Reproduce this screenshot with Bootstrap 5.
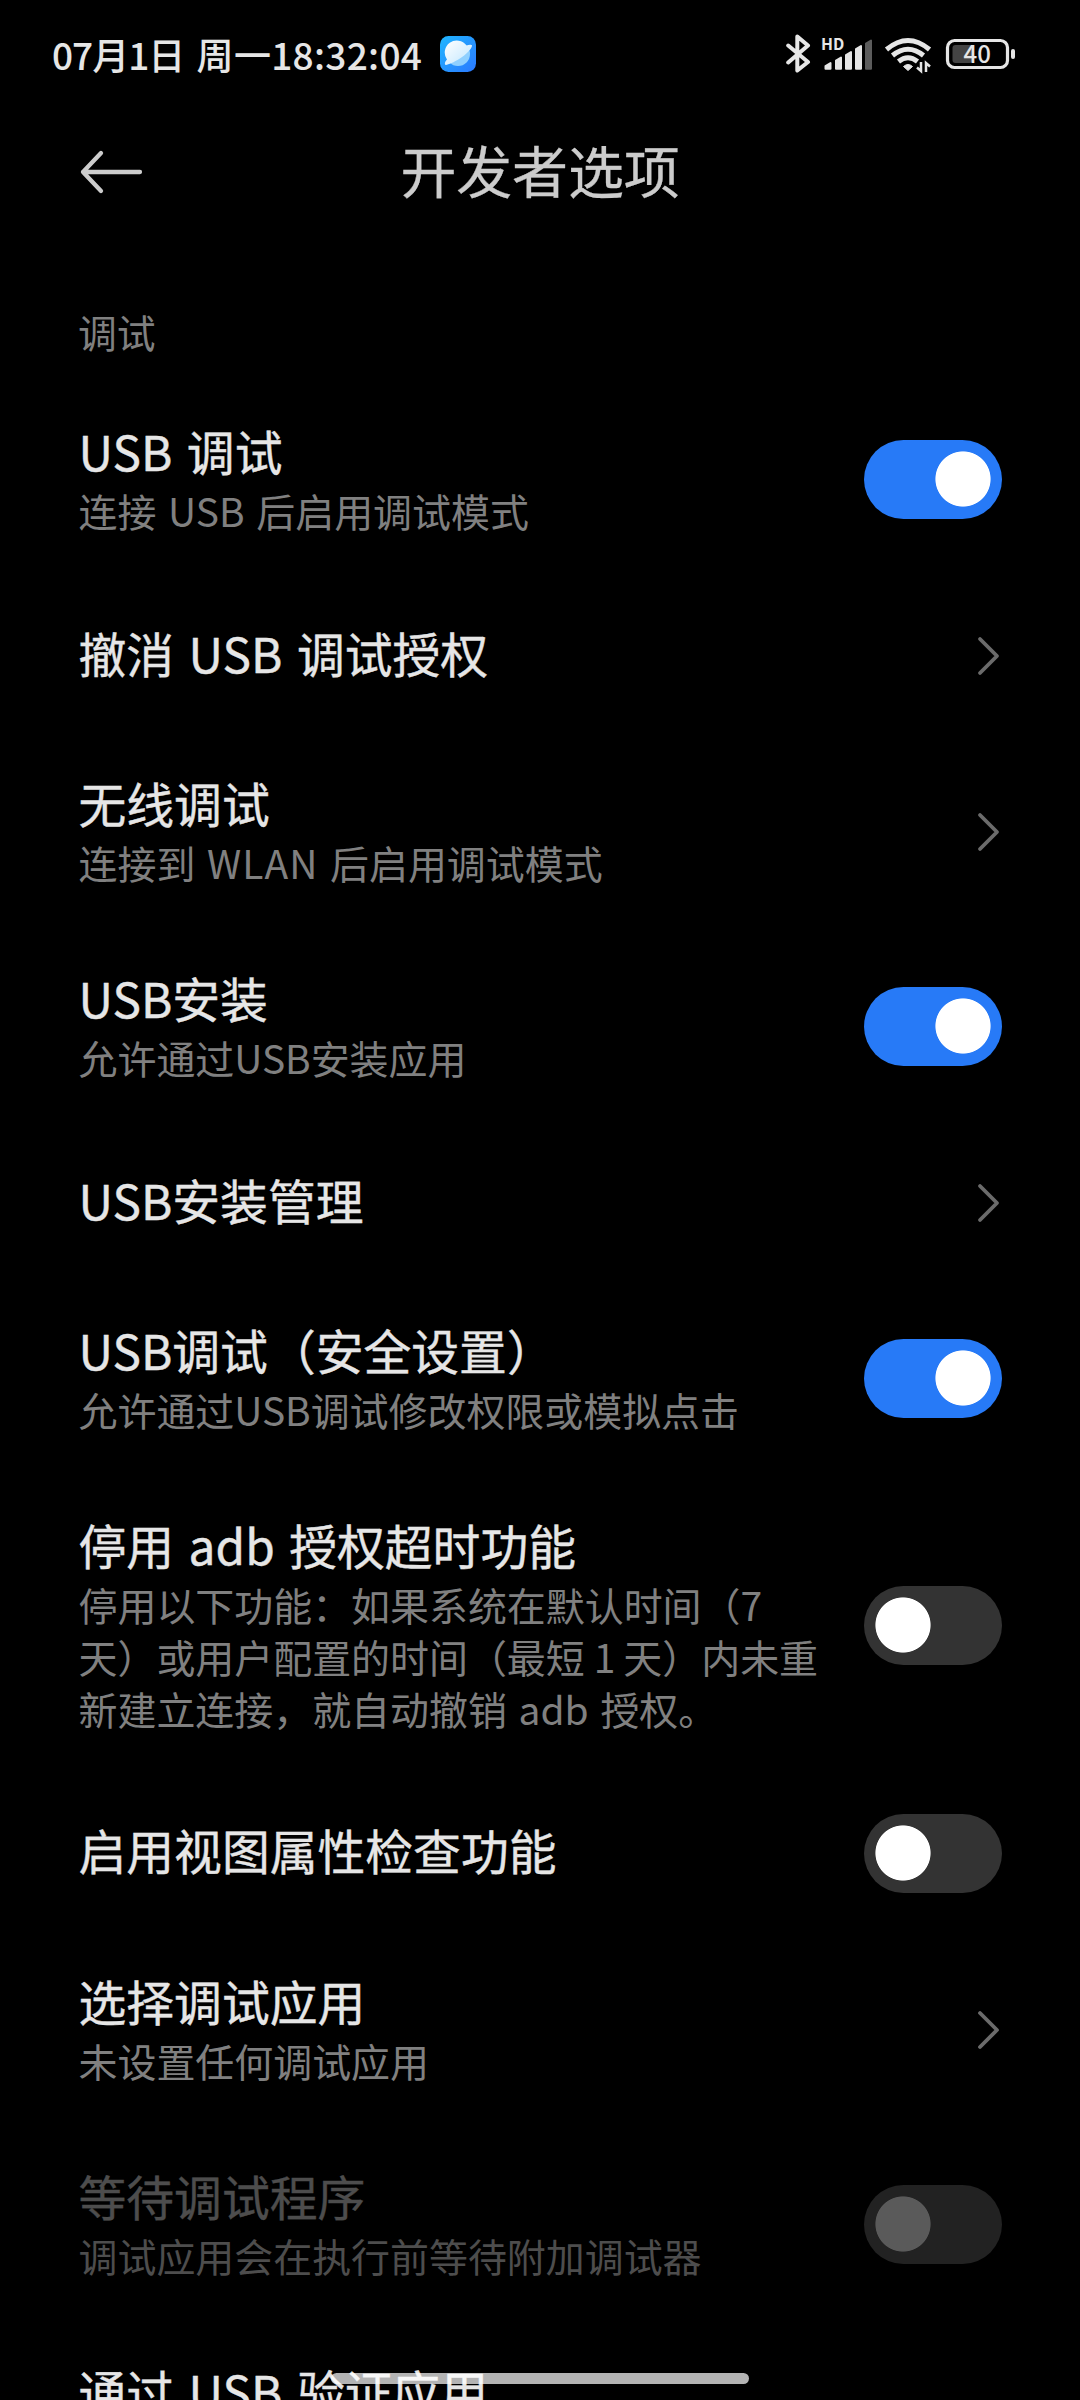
<!DOCTYPE html>
<html lang="zh-CN" data-bs-theme="dark">
<head>
<meta charset="utf-8">
<meta name="viewport" content="width=device-width, initial-scale=1">
<title>开发者选项</title>
<link href="https://cdn.jsdelivr.net/npm/bootstrap@5.3.0/dist/css/bootstrap.min.css" rel="stylesheet">
<style>
  body { background: #000; font-family: "Noto Sans CJK SC", sans-serif; height: 2400px; overflow: hidden; }
  .screen { width: 1080px; height: 2400px; overflow: hidden; }
  .status-bar { height: 108px; padding: 0 64px 0 52px; color: #e6e6e6; }
  .clock { font-size: 37px; font-weight: 500; line-height: 52px; white-space: pre; padding-bottom: 1px; }
  .clock-date { letter-spacing: -1px; word-spacing: 5px; }
  .clock-time { letter-spacing: .3px; }
  .app-icon { margin-left: 18px; }
  .app-bar { height: 128px; padding: 0 78px; color: #ccc; }
  .app-title { font-size: 56px; line-height: 76px; padding-bottom: 6px; letter-spacing: -.2px; -webkit-text-stroke: .3px currentColor; }
  .side-slot { width: 66px; }
  .section-label { height: 146px; padding: 69px 78px 0; font-size: 38.800px; line-height: 52px; color: #808080; }
  .pref-row { min-height: 157px; padding: 39.5px 78px 39.5px 78.5px; }
  .pref-row.pref-tall { padding-bottom: 38.800px; }
  .pref-title { font-size: 47.800px; line-height: 58px; padding-bottom: 6px; color: #e6e6e6; word-spacing: 3.8px; -webkit-text-stroke: .4px currentColor; }
  .pref-note { font-size: 38.950px; line-height: 52px; margin-top: -2px; margin-bottom: 2px; color: #808080; word-spacing: 3px; }
  .pref-text { width: 746px; }
  .wide-latin { letter-spacing: 1px; }
  .tight { word-spacing: 1px; letter-spacing: -.800px; }
  .pref-off .pref-title, .pref-off .pref-note { color: #4d4d4d; }
  .toggle.form-check-input {
    width: 138px; height: 79px; border: 0; border-radius: 40px; margin: 0;
    background-color: #333; background-size: 56px 56px; background-repeat: no-repeat;
    background-image: radial-gradient(circle closest-side, #fff 97%, transparent 100%);
    background-position: 11px 11px;
  }
  .toggle.form-check-input:checked {
    background-color: #277af7; background-position: 71px 11px;
    background-image: radial-gradient(circle closest-side, #fff 97%, transparent 100%);
  }
  .toggle.form-check-input:disabled {
    opacity: 1; background-color: #222;
    background-image: radial-gradient(circle closest-side, #5a5a5a 97%, transparent 100%);
  }
  .home-bar { left: 331px; top: 2373px; width: 418px; height: 11px; border-radius: 6px; background: rgba(255,255,255,.7); }
</style>
</head>
<body>
<main class="screen position-relative">
  <header class="status-bar d-flex align-items-center justify-content-between">
    <div class="d-flex align-items-center">
      <span class="clock"><span class="clock-date">07月1日 </span><span class="clock-time">周一18:32:04</span></span>
      <svg class="app-icon" width="36" height="36" viewBox="0 0 36 36">
        <defs>
          <linearGradient id="app" x1="0" y1="0" x2="1" y2="1"><stop offset="0" stop-color="#1fb6ff"/><stop offset="1" stop-color="#2b78ff"/></linearGradient>
          <linearGradient id="planet" x1="0" y1="0" x2="1" y2="1"><stop offset="0" stop-color="#fff"/><stop offset="1" stop-color="#bfe6ff"/></linearGradient>
        </defs>
        <rect width="36" height="36" rx="8.5" fill="url(#app)"/>
        <circle cx="18" cy="18" r="12" fill="#8fd0ff"/>
        <path d="M5 28.500C4.500 26.500 5.500 25 7 23.500A12 12 0 0 1 26.500 9.500C28.500 8.800 31.500 8.500 32 9.500C32.300 12 27 18 19.500 22.800C13 26.800 6 30 5 28.500Z" fill="url(#planet)"/>
      </svg>
    </div>
    <svg width="230" height="44" viewBox="786 32 230 44" fill="none">
      <path d="M788.200 45.500 808 62 797.300 70.500V36.500L808 45.500 788.200 62.500" stroke="#e6e6e6" stroke-width="4" stroke-linejoin="round" stroke-linecap="round"/>
      <text x="821" y="50.200" font-size="15.800" font-weight="700" fill="#e6e6e6">HD</text>
      <g fill="#e6e6e6" stroke="#e6e6e6" stroke-width="2" stroke-linejoin="round"><path d="M825.500 68.700V66l5-3v5.700z"/><path d="M836 68.700V60.500l5-3v11.200z"/><path d="M846 68.700V55l5-3v16.700z"/><path d="M856 68.700V49l5-3v22.700z"/><path d="M866 68.700V43.500l5-3v28.200z" fill="#5c5c5c" stroke="#5c5c5c"/></g>
      <g stroke="#e6e6e6" stroke-width="5"><path d="M886.500 49.500Q908 31.500 929.500 49.500"/><path d="M892.500 55.500Q908 43 923.500 55.500"/><path d="M898.500 61.500Q908 54 917.500 61.500"/></g>
      <path d="M903.500 66.500Q908 62.500 912.500 66.500L908 70.500Z" fill="#e6e6e6" stroke="#e6e6e6" stroke-linejoin="round"/>
      <path d="M921 62V71L917 67.500M926 72V63L930 66.500" stroke="#e6e6e6" stroke-width="2.500"/>
      <rect x="947.500" y="40.500" width="60" height="27" rx="7" stroke="#e6e6e6" stroke-width="3.200"/>
      <rect x="952.500" y="45" width="20" height="18" rx="3" fill="#444"/>
      <rect x="1011" y="49" width="4" height="10" rx="2" fill="#e6e6e6"/>
      <text x="977.300" y="63" text-anchor="middle" font-size="24" font-weight="500" fill="#e6e6e6">40</text>
    </svg>
  </header>

  <nav class="app-bar d-flex align-items-center justify-content-between">
    <svg class="side-slot" height="48" viewBox="0 0 66 48" fill="none" stroke="#ccc" stroke-width="4.300" stroke-linecap="round" stroke-linejoin="round"><path d="M23 5 5 24 23 43M5 24H62"/></svg>
    <span class="app-title">开发者选项</span>
    <span class="side-slot"></span>
  </nav>

  <div class="section-label">调试</div>

  <section>
    <div class="pref-row d-flex align-items-center justify-content-between">
      <div class="pref-text"><div class="pref-title">USB 调试</div><div class="pref-note">连接 USB 后启用调试模式</div></div>
      <input class="form-check-input toggle" type="checkbox" role="switch" checked>
    </div>
    <div class="pref-row d-flex align-items-center justify-content-between">
      <div class="pref-text"><div class="pref-title">撤消 USB 调试授权</div></div>
      <svg width="26" height="42" viewBox="0 0 26 42" fill="none" stroke="#6b6b6b" stroke-width="3.800" stroke-linecap="round" stroke-linejoin="round"><path d="M4 4 21 21 4 38"/></svg>
    </div>
    <div class="pref-row d-flex align-items-center justify-content-between">
      <div class="pref-text"><div class="pref-title">无线调试</div><div class="pref-note">连接到 <span class="wide-latin">WLAN</span> 后启用调试模式</div></div>
      <svg width="26" height="42" viewBox="0 0 26 42" fill="none" stroke="#6b6b6b" stroke-width="3.800" stroke-linecap="round" stroke-linejoin="round"><path d="M4 4 21 21 4 38"/></svg>
    </div>
    <div class="pref-row d-flex align-items-center justify-content-between">
      <div class="pref-text"><div class="pref-title">USB安装</div><div class="pref-note">允许通过USB安装应用</div></div>
      <input class="form-check-input toggle" type="checkbox" role="switch" checked>
    </div>
    <div class="pref-row d-flex align-items-center justify-content-between">
      <div class="pref-text"><div class="pref-title">USB安装管理</div></div>
      <svg width="26" height="42" viewBox="0 0 26 42" fill="none" stroke="#6b6b6b" stroke-width="3.800" stroke-linecap="round" stroke-linejoin="round"><path d="M4 4 21 21 4 38"/></svg>
    </div>
    <div class="pref-row d-flex align-items-center justify-content-between">
      <div class="pref-text"><div class="pref-title">USB调试（安全设置）</div><div class="pref-note">允许通过USB调试修改权限或模拟点击</div></div>
      <input class="form-check-input toggle" type="checkbox" role="switch" checked>
    </div>
    <div class="pref-row pref-tall d-flex align-items-center justify-content-between">
      <div class="pref-text"><div class="pref-title">停用 adb 授权超时功能</div><div class="pref-note text-nowrap">停用以下功能：如果系统在默认时间（7<br>天）或用户配置的时间（最短<span class="tight"> 1 </span>天）内未重<br>新建立连接，就自动撤销 adb 授权。</div></div>
      <input class="form-check-input toggle" type="checkbox" role="switch">
    </div>
    <div class="pref-row d-flex align-items-center justify-content-between">
      <div class="pref-text"><div class="pref-title">启用视图属性检查功能</div></div>
      <input class="form-check-input toggle" type="checkbox" role="switch">
    </div>
    <div class="pref-row d-flex align-items-center justify-content-between">
      <div class="pref-text"><div class="pref-title">选择调试应用</div><div class="pref-note">未设置任何调试应用</div></div>
      <svg width="26" height="42" viewBox="0 0 26 42" fill="none" stroke="#6b6b6b" stroke-width="3.800" stroke-linecap="round" stroke-linejoin="round"><path d="M4 4 21 21 4 38"/></svg>
    </div>
    <div class="pref-row pref-off d-flex align-items-center justify-content-between">
      <div class="pref-text"><div class="pref-title">等待调试程序</div><div class="pref-note">调试应用会在执行前等待附加调试器</div></div>
      <input class="form-check-input toggle" type="checkbox" role="switch" disabled>
    </div>
    <div class="pref-row d-flex align-items-start">
      <div class="pref-text"><div class="pref-title">通过 USB 验证应用</div></div>
    </div>
  </section>

  <div class="home-bar position-absolute"></div>
</main>
<script src="https://cdn.jsdelivr.net/npm/bootstrap@5.3.0/dist/js/bootstrap.bundle.min.js"></script>
</body>
</html>
